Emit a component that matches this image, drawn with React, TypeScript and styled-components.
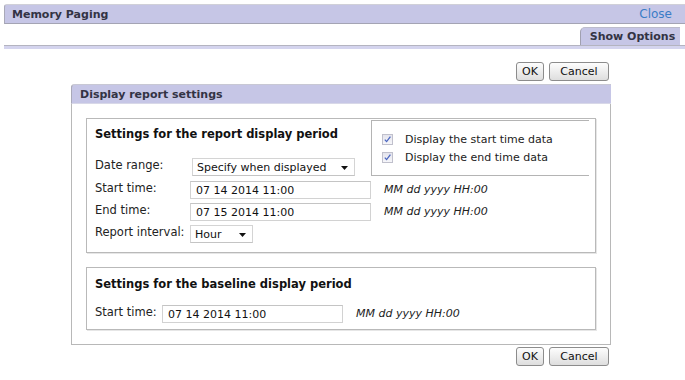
import React from "react";
import styled, { createGlobalStyle } from "styled-components";

const GlobalStyle = createGlobalStyle`
  html, body {
    margin: 0;
    padding: 0;
    background: #ffffff;
  }
  body {
    font-family: "DejaVu Sans", Verdana, sans-serif;
    font-size: 11px;
    color: #222;
  }
`;

type Row = { label: string; value: string };

const reportRows: Row[] = [
  { label: "Start time:", value: "07 14 2014 11:00" },
  { label: "End time:", value: "07 15 2014 11:00" },
];

const Arrow = () => (
  <svg width="7" height="4" viewBox="0 0 7 4">
    <path d="M0 0h7L3.5 4z" fill="#111" />
  </svg>
);

const CheckMark = () => (
  <svg width="9" height="9" viewBox="0 0 9 9">
    <path d="M1.8 4.6l1.8 2 3.8-5" fill="none" stroke="#4a66c0" strokeWidth="1.3" />
  </svg>
);

const App = () => {
  return (
    <Page>
      <GlobalStyle />
      <TitleBar>
        <TitleText>Memory Paging</TitleText>
        <CloseLink>Close</CloseLink>
      </TitleBar>
      <TabRow>
        <Tab>Show Options</Tab>
      </TabRow>
      <TabLine />

      <Content>
        <ButtonBar>
          <Button>OK</Button>
          <Button $wide>Cancel</Button>
        </ButtonBar>

        <Dialog>
          <DialogHeader>Display report settings</DialogHeader>
          <DialogBody>
            <Fieldset>
              <TopSection>
                <LeftCol>
                  <SectionTitle>Settings for the report display period</SectionTitle>
                  <FormRow>
                    <Label $width={95}>Date range:</Label>
                    <SelectBox $width={163} $offset={2}>
                      <span>Specify when displayed</span>
                      <Arrow />
                    </SelectBox>
                  </FormRow>
                </LeftCol>
                <CheckPanel>
                  <CheckRow>
                    <CheckBox>
                      <CheckMark />
                    </CheckBox>
                    Display the start time data
                  </CheckRow>
                  <CheckRow>
                    <CheckBox>
                      <CheckMark />
                    </CheckBox>
                    Display the end time data
                  </CheckRow>
                </CheckPanel>
              </TopSection>

              <Rows>
                {reportRows.map((row) => (
                  <FormRow key={row.label}>
                    <Label $width={95}>{row.label}</Label>
                    <TextInput readOnly defaultValue={row.value} />
                    <Hint>MM dd yyyy HH:00</Hint>
                  </FormRow>
                ))}
                <FormRow>
                  <Label $width={95}>Report interval:</Label>
                  <SelectBox $width={63} $offset={0}>
                    <span>Hour</span>
                    <Arrow />
                  </SelectBox>
                </FormRow>
              </Rows>
            </Fieldset>

            <Fieldset $baseline>
              <SectionTitle>Settings for the baseline display period</SectionTitle>
              <FormRow>
                <Label $width={67}>Start time:</Label>
                <TextInput readOnly defaultValue="07 14 2014 11:00" />
                <Hint>MM dd yyyy HH:00</Hint>
              </FormRow>
            </Fieldset>
          </DialogBody>
        </Dialog>

        <ButtonBar $bottom>
          <Button>OK</Button>
          <Button $wide>Cancel</Button>
        </ButtonBar>
      </Content>
    </Page>
  );
};

/** Page chrome */
const Page = styled.div`
  width: 685px;
  height: 380px;
  padding-top: 4px;
  box-sizing: border-box;
  overflow: hidden;
`;

const TitleBar = styled.div`
  margin-left: 4px;
  height: 20px;
  box-sizing: border-box;
  display: flex;
  align-items: center;
  justify-content: space-between;
  padding: 0 13px 0 7px;
  background: #c6c6e6;
  border-top: 1px solid #d0d0d8;
  border-left: 1px solid #a9a9b8;
  border-bottom: 1px solid #a4a4b4;
  border-top-left-radius: 3px;
`;

const TitleText = styled.span`
  font-weight: bold;
  color: #333344;
`;

const CloseLink = styled.span`
  color: #3a7cc6;
  font-size: 12px;
`;

const TabRow = styled.div`
  display: flex;
  justify-content: flex-end;
  margin-top: 3px;
  padding-right: 5px;
`;

const Tab = styled.div`
  width: 100px;
  height: 18px;
  box-sizing: border-box;
  display: flex;
  align-items: center;
  justify-content: center;
  padding-left: 4px;
  background: #c6c6e6;
  border-top: 1px solid #bcbccc;
  border-left: 1px solid #a0a0b0;
  border-top-left-radius: 5px;
  font-weight: bold;
  color: #333344;
`;

const TabLine = styled.div`
  margin-left: 4px;
  height: 3px;
  background: #d4d4ee;
  border-top: 1px solid #b4b4c0;
`;

/** Dialog */
const Content = styled.div`
  width: 540px;
  margin-left: 71px;
  margin-top: 13px;
`;

const ButtonBar = styled.div<{ $bottom?: boolean }>`
  display: flex;
  justify-content: flex-end;
  gap: 5px;
  padding-right: 2px;
  margin-top: ${(p) => (p.$bottom ? "2px" : "0")};
  margin-bottom: ${(p) => (p.$bottom ? "0" : "3px")};
`;

const Button = styled.button<{ $wide?: boolean }>`
  height: 19px;
  width: ${(p) => (p.$wide ? "60px" : "28px")};
  padding: 0;
  font-family: "DejaVu Sans", Verdana, sans-serif;
  font-size: 11px;
  color: #111;
  background: linear-gradient(#fdfdfd, #dedede);
  border: 1px solid #8c8c8c;
  border-radius: 3px;
`;

const Dialog = styled.div`
  border: 1px solid #b8b8b8;
  border-top: none;
  border-top-left-radius: 4px;
  background: #fff;
`;

const DialogHeader = styled.div`
  height: 20px;
  box-sizing: border-box;
  display: flex;
  align-items: center;
  padding-left: 8px;
  background: #c6c6e6;
  border-top: 1px solid #c8c8d4;
  border-bottom: 1px solid #d8d8e8;
  border-top-left-radius: 4px;
  font-weight: bold;
  color: #333344;
  margin: 0 -1px;
  border-left: 1px solid #a9a9b8;
`;

const DialogBody = styled.div`
  padding: 14px 14px 14px;
  display: flex;
  flex-direction: column;
  gap: 14px;
`;

const Fieldset = styled.div<{ $baseline?: boolean }>`
  border: 1px solid #b9b9b9;
  box-shadow: 1px 1px 0 #e6e6e6;
  padding: ${(p) => (p.$baseline ? "8px 8px 6px" : "0 6px 9px 8px")};
  display: flex;
  flex-direction: column;
  gap: ${(p) => (p.$baseline ? "13px" : "5px")};
`;

const TopSection = styled.div`
  display: flex;
  justify-content: space-between;
`;

const LeftCol = styled.div`
  display: flex;
  flex-direction: column;
  justify-content: space-between;
  padding-top: 7px;
`;

const SectionTitle = styled.div`
  font-weight: bold;
  font-size: 11.5px;
  color: #111;
  line-height: 16px;
`;

const CheckPanel = styled.div`
  width: 218px;
  height: 56px;
  box-sizing: border-box;
  margin-top: 1px;
  border-top: 1px solid #b4b4b4;
  border-left: 1px solid #b4b4b4;
  border-bottom: 1px solid #b4b4b4;
  padding: 12px 0 0 10px;
  display: flex;
  flex-direction: column;
  gap: 5px;
`;

const CheckRow = styled.div`
  display: flex;
  align-items: center;
  gap: 12px;
  height: 13px;
  color: #222;
`;

const CheckBox = styled.span`
  width: 11px;
  height: 11px;
  box-sizing: border-box;
  border: 1px solid #c0c0cc;
  background: linear-gradient(#e4e4ec, #f6f6fa);
  display: flex;
  align-items: center;
  justify-content: center;
`;

const Rows = styled.div`
  display: flex;
  flex-direction: column;
  gap: 4px;
`;

const FormRow = styled.div`
  display: flex;
  align-items: flex-start;
  height: 18px;
`;

const Label = styled.span<{ $width: number }>`
  width: ${(p) => p.$width}px;
  flex-shrink: 0;
  font-size: 11.5px;
  line-height: 14px;
  color: #222;
  white-space: nowrap;
`;

const SelectBox = styled.div<{ $width: number; $offset: number }>`
  width: ${(p) => p.$width}px;
  height: 18px;
  margin-left: ${(p) => p.$offset}px;
  box-sizing: border-box;
  display: flex;
  align-items: center;
  justify-content: space-between;
  padding: 1px 6px 0 4px;
  background: #fff;
  border: 1px solid #d4d4d4;
  border-bottom-color: #c4c4c4;
  color: #111;
`;

const TextInput = styled.input`
  width: 181px;
  height: 18px;
  box-sizing: border-box;
  margin: 0;
  padding: 1px 5px 0;
  font-family: "DejaVu Sans", Verdana, sans-serif;
  font-size: 11px;
  color: #111;
  border: 1px solid #d2d2d2;
  border-top-color: #c4c4c4;
  outline: none;
`;

const Hint = styled.span`
  margin-left: 13px;
  margin-top: 2px;
  font-style: italic;
  color: #222;
`;

/** Exports */
export default App;
